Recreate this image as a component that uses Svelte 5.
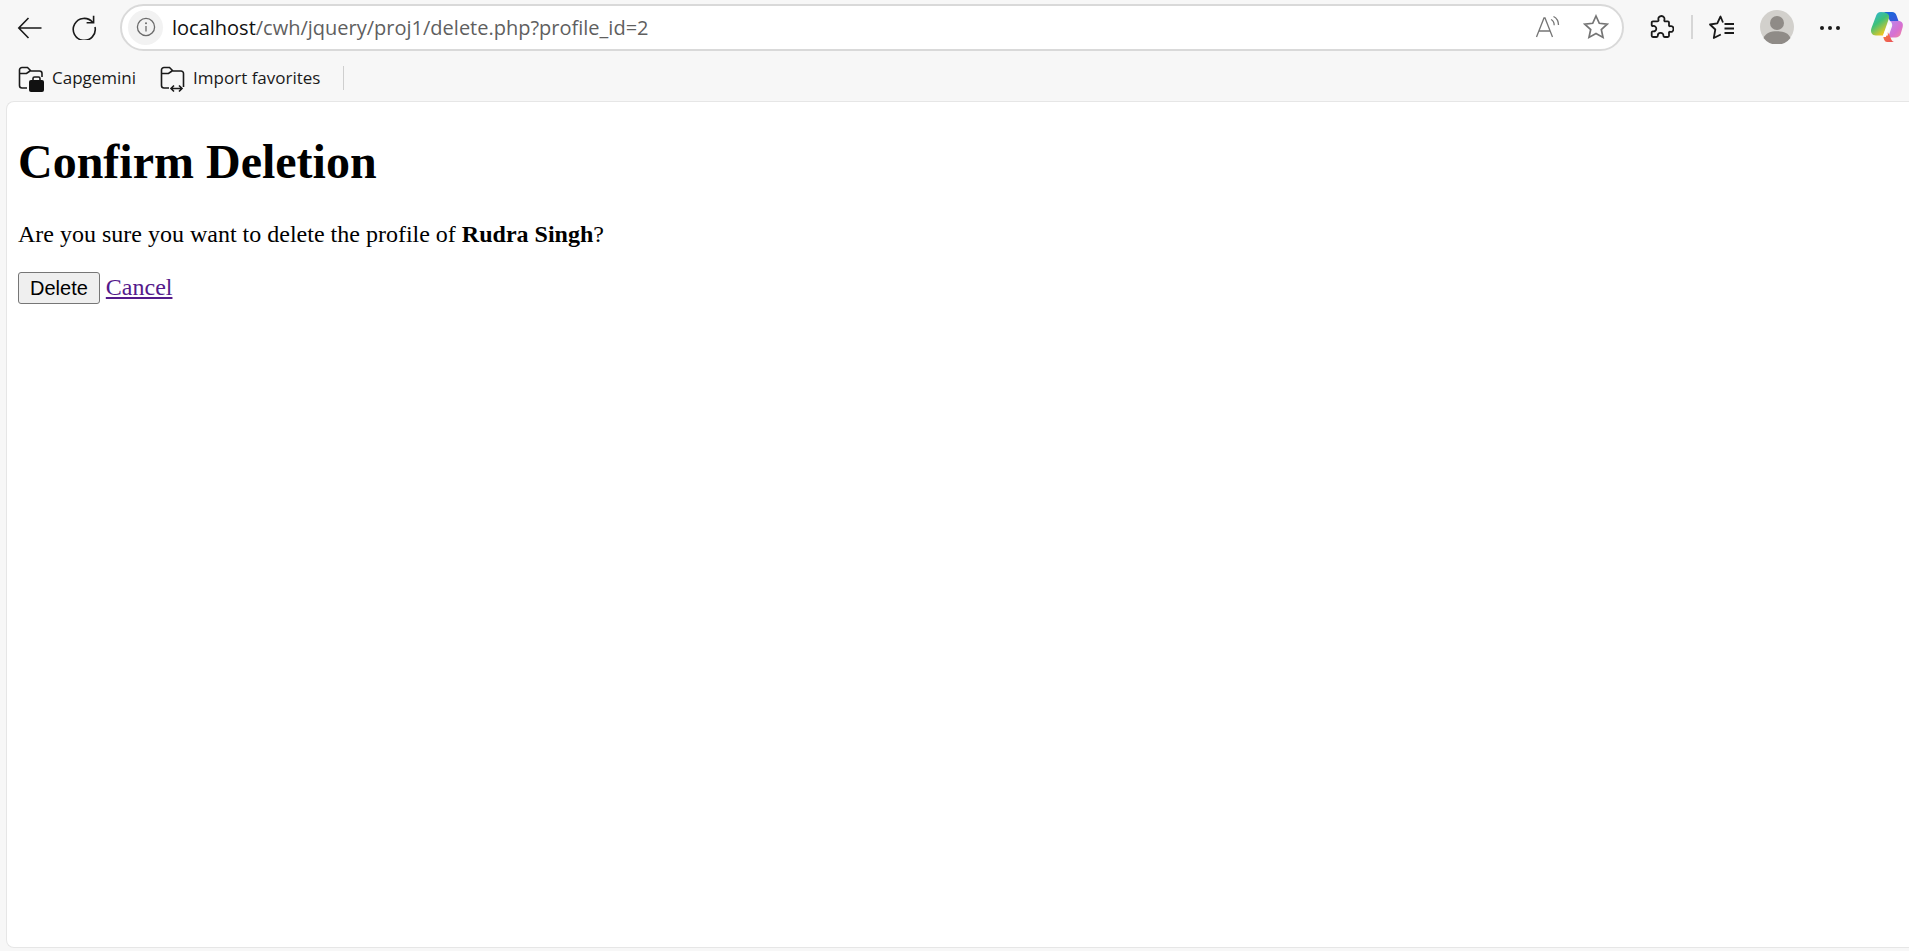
<script>
  const profile = 'Rudra Singh';
</script>

<div class="browser">
  <div class="toolbar">
    <button class="tool back" aria-label="Back">
      <svg width="26" height="24" viewBox="0 0 26 24"><path d="M24.5 12H2M11.5 2 1.8 12l9.700 10" /></svg>
    </button>
    <button class="tool reload" aria-label="Reload">
      <svg width="26" height="26" viewBox="0 0 26 26"><path d="M21.6 8.2A11 11 0 1 0 24 13M22.600 1.800v7h-7" /></svg>
    </button>

    <div class="address">
      <span class="info">
        <svg width="20" height="20" viewBox="0 0 20 20"><circle cx="10" cy="10" r="8.6" /><path d="M10 9v5.4" /><circle class="dot" cx="10" cy="6.3" r="1" /></svg>
      </span>
      <span class="url"><span class="host">localhost</span>/cwh/jquery/proj1/delete.php?profile_id=2</span>
      <span class="read" aria-hidden="true">
        <svg width="26" height="24" viewBox="0 0 26 24"><path d="M1.500 22 9 3h1l7.500 19M4 16h11M16 4.500c2 1 3.200 3 3.200 5.800M18.500 1.500c3 1.500 5 4.700 5 8.500" /></svg>
      </span>
      <span class="star">
        <svg width="26" height="26" viewBox="0 0 26 26"><path d="m13 2 3.300 7.300 7.900.9-5.900 5.300 1.700 7.900L13 19.400l-7 4 1.700-7.900-5.900-5.300 7.900-.9z" /></svg>
      </span>
    </div>

    <div class="actions">
      <span class="ext">
        <svg width="24" height="25" viewBox="0 0 24 25"><path d="M8.500 5C7.800 2.800 9.500 1 11.500 1s3.500 1.800 2.800 4.200c-.2.800.3 1.200 1 1.200h2.500c.8 0 1.200.5 1.200 1.200v2.600c-.1.700.5 1.200 1.200 1 2-.6 3.300 1 3.300 2.800s-1.500 3.400-3.300 2.800c-.7-.2-1.300.3-1.200 1v3c0 .7-.5 1.200-1.200 1.200h-3.200c-.9 0-1.200-.6-1.200-1.200.2-1.800-1.200-3.100-2.900-3s-2.800 1.300-2.700 3c0 .6-.4 1.200-1.200 1.200H3c-.8 0-1.300-.5-1.300-1.200v-3.300c0-.8.500-1.200 1.200-1.100 2 .3 3.400-1 3.400-2.700S4.900 10.700 2.900 11c-.7.100-1.200-.4-1.200-1.100V7.600c0-.7.500-1.200 1.300-1.200h4.200c1 0 1.500-.6 1.300-1.400z" /></svg>
      </span>
      <span class="sep"></span>
      <span class="favs">
        <svg width="26" height="25" viewBox="0 0 26 25"><path d="M14 7.500 11.500 1.500 8.300 8.300 1 9.500l5.300 5L4.800 23l7-3.500M15.500 9H25M15.500 13.500H25M15.500 18H25" /></svg>
      </span>
      <span class="avatar">
        <svg width="34" height="34" viewBox="0 0 34 34"><circle class="face" cx="17" cy="17" r="17" /><circle class="body" cx="17" cy="13" r="7" /><path class="body" d="M3.500 28c2-5 7-6.800 13.500-6.800S28.500 23 30.500 28a17 17 0 0 1-27 0z" /></svg>
      </span>
      <span class="more">
        <i></i><i></i><i></i>
      </span>
      <span class="copilot">
        <svg width="34" height="32" viewBox="0 0 34 32">
          <defs>
            <linearGradient id="cpA" x1="0" y1="0" x2="0.6" y2="1"><stop offset="0" stop-color="#2fb4e8" /><stop offset=".5" stop-color="#3ec17a" /><stop offset="1" stop-color="#f4c71c" /></linearGradient>
            <linearGradient id="cpB" x1="0" y1="0" x2="1" y2="1"><stop offset="0" stop-color="#0f6fdc" /><stop offset="1" stop-color="#3b54d8" /></linearGradient>
            <linearGradient id="cpC" x1="0" y1="0" x2="1" y2="1"><stop offset="0" stop-color="#b58bf0" /><stop offset=".6" stop-color="#d86fd0" /><stop offset="1" stop-color="#f58a9a" /></linearGradient>
            <linearGradient id="cpD" x1="0" y1="0" x2="1" y2="1"><stop offset="0" stop-color="#f8803c" /><stop offset="1" stop-color="#e9505a" /></linearGradient>
          </defs>
          <path fill="url(#cpB)" d="M11 1h11c2.500 0 3.800 1.500 4.500 3.500l2 5.500H20L17 4c-.8-2-3-3-6-3z" />
          <path fill="url(#cpA)" d="M11 1C8 1 6.500 3 5.800 5.500L1.500 17c-1.500 4 .5 7.500 4.500 7.500h7l4.500-13L19 7c.5-1.800 0-6-8-6z" />
          <path fill="url(#cpC)" d="M20 10h8.500c3.500 0 5 2.500 4.200 6l-2 7c-.7 2.200-2.700 3.500-5 3.500H18l4-11c.7-2-.3-4.500-2-5.500z" />
          <path fill="url(#cpD)" d="M13 24.500h5l-.5-4L20.500 26.500c.5 1.800 2 4.500 3.500 4.500H17c-2.500 0-3.300-3-4-6.500z" />
          <path fill="#fff" d="M17.500 13.500h3.300l-5 12.500h-3.300z" />
        </svg>
      </span>
    </div>
  </div>

  <div class="bookmarks">
    <span class="mark work">
      <svg width="27" height="27" viewBox="0 0 27 27">
        <path d="M9 22H4a2.500 2.500 0 0 1-2.500-2.500V4A2.500 2.500 0 0 1 4 1.500h5.500L13 5h8.500A2.500 2.500 0 0 1 24 7.500V11M1.500 7.500h7L12 5" />
        <rect class="solid" x="11" y="14" width="15" height="12" rx="2" />
        <path d="M15 14.500v-2a1.500 1.500 0 0 1 1.500-1.500h4a1.500 1.500 0 0 1 1.500 1.500v2" />
      </svg>
      Capgemini
    </span>
    <span class="mark import">
      <svg width="26" height="27" viewBox="0 0 26 27">
        <path d="M9 22H4a2.500 2.500 0 0 1-2.500-2.500V4A2.500 2.500 0 0 1 4 1.500h5.500L13 5h8A2.500 2.500 0 0 1 23.500 7.500V21M1.500 7.500h7L12 5M11 22.500h11M14 19.500l-3 3 3 3M19 19.500l3 3-3 3" />
      </svg>
      Import favorites
    </span>
    <span class="sep short"></span>
  </div>

  <main class="page">
    <h1>Confirm Deletion</h1>
    <p>Are you sure you want to delete the profile of <strong>{profile}</strong>?</p>
    <form onsubmit={(e) => e.preventDefault()}>
      <button class="delete" type="submit">Delete</button>
      <a href="#cancel">Cancel</a>
    </form>
  </main>
</div>

<style>
  :global(body) {
    margin: 0;
    overflow: hidden;
    background: #f7f7f7;
  }

  .browser {
    height: 100vh;
    display: flex;
    flex-direction: column;
    font-family: "Open Sans", "Noto Sans", sans-serif;
    color: #1a1a1a;
  }

  svg {
    display: block;
    fill: none;
    stroke: currentColor;
    stroke-width: 1.6;
  }

  .toolbar {
    height: 56px;
    display: flex;
    align-items: center;
    flex-shrink: 0;
  }

  .tool {
    border: 0;
    padding: 0;
    background: none;
    color: #1a1a1a;
  }

  .back {
    margin-left: 17px;
  }

  .reload {
    margin-left: 28px;
    margin-top: -3px;
  }

  .address {
    margin-left: 23px;
    width: 1504px;
    height: 47px;
    box-sizing: border-box;
    margin-top: -2px;
    background: #fff;
    border: 2px solid #d9d9d9;
    border-radius: 24px;
    display: flex;
    align-items: center;
    padding-left: 6px;
  }

  .info {
    width: 35px;
    height: 35px;
    border-radius: 50%;
    background: #f2f2f2;
    color: #6b6b6b;
    display: flex;
    align-items: center;
    justify-content: center;
  }

  .info svg {
    stroke-width: 1.3;
  }

  .info .dot {
    fill: currentColor;
    stroke: none;
  }

  .url {
    margin-left: 9px;
    font-size: 20px;
    color: #5f5f5f;
    flex: 1;
  }

  .host {
    color: #111;
  }

  .read, .star {
    color: #757575;
  }

  .read svg {
    stroke-width: 1.3;
  }

  .star {
    margin-left: 22px;
    margin-right: 13px;
  }

  .star svg {
    stroke-width: 1.7;
  }

  .actions {
    display: flex;
    align-items: center;
    margin-top: -2px;
  }

  .ext {
    margin-left: 26px;
  }

  .ext svg, .favs svg {
    stroke-width: 1.8;
    stroke-linejoin: round;
  }

  .sep {
    width: 2px;
    height: 24px;
    background: #d6d6d6;
    margin-left: 17px;
    display: block;
  }

  .favs {
    margin-left: 16px;
  }

  .avatar {
    margin-left: 25px;
  }

  .avatar svg {
    stroke: none;
  }

  .avatar .face {
    fill: #d2d0cc;
  }

  .avatar .body {
    fill: #8f8b87;
  }

  .more {
    margin-left: 26px;
    display: flex;
    gap: 4px;
    width: 20px;
    margin-top: 2px;
  }

  .more i {
    width: 4px;
    height: 4px;
    border-radius: 50%;
    background: #1a1a1a;
    flex-shrink: 0;
  }

  .copilot {
    margin-left: 30px;
  }

  .copilot svg {
    stroke: none;
  }

  .bookmarks {
    height: 45px;
    display: flex;
    align-items: center;
    flex-shrink: 0;
    font-size: 17px;
    padding-bottom: 2px;
    box-sizing: border-box;
  }

  .mark {
    display: flex;
    align-items: center;
    gap: 7px;
  }

  .work {
    margin-left: 18px;
  }

  .import {
    margin-left: 24px;
  }

  .mark svg {
    margin-top: 4px;
  }

  .mark .solid {
    fill: #111;
    stroke: none;
  }

  .sep.short {
    margin-left: 23px;
    width: 1px;
    height: 24px;
    background: #cfcfcf;
  }

  .page {
    flex: 1;
    margin-left: 6px;
    margin-bottom: 3px;
    padding: 32px 11px 0;
    background: #fff;
    border: solid #e6e6e6;
    border-width: 1px 0 1px 1px;
    border-radius: 8px 0 0 8px;
    font-family: "Liberation Serif", serif;
    font-size: 24px;
    color: #000;
    box-sizing: border-box;
  }

  h1 {
    margin: 0 0 32px;
    font-size: 48px;
    font-weight: bold;
  }

  p {
    margin: 0 0 24px;
  }

  .delete {
    font-family: "Liberation Sans", sans-serif;
    font-size: 20px;
    color: #000;
    background: #efefef;
    border: 1.5px solid #767676;
    border-radius: 3px;
    padding: 0 11px;
    height: 32px;
    box-sizing: border-box;
  }

  a {
    color: #551a8b;
  }
</style>
